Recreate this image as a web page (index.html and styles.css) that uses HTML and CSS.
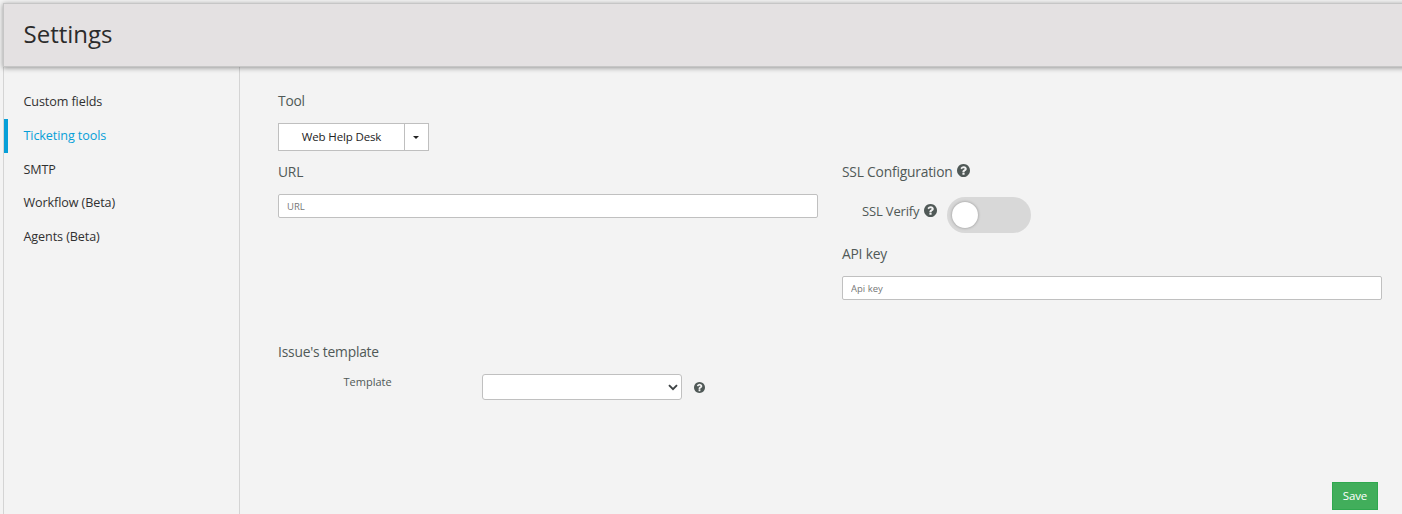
FILE: index.html
```html
<!DOCTYPE html>
<html lang="en">
<head>
<meta charset="utf-8">
<title>Settings</title>
<link rel="stylesheet" href="styles.css">
</head>
<body>
<svg class="symbols" aria-hidden="true">
  <symbol id="help" viewBox="0 0 1536 1536">
    <path fill="currentColor" d="M896 1248v-192q0-14-9-23t-23-9H672q-14 0-23 9t-9 23v192q0 14 9 23t23 9h192q14 0 23-9t9-23zm256-672q0-88-55.500-163T958 297t-170-41q-243 0-371 213-15 24 8 42l132 100q7 6 19 6 16 0 25-12 53-68 86-92 34-24 86-24 48 0 85.500 26t37.500 59q0 38-20 61t-68 45q-63 28-115.500 86.500T640 892v36q0 14 9 23t23 9h192q14 0 23-9t9-23q0-19 21.500-49.500T972 829q32-18 49-28.500t46-35 44.500-48 28-60.500 12.500-81zm384 192q0 209-103 385.500T1153.500 1433 768 1536t-385.500-103T103 1153.500 0 768t103-385.500T382.500 103 768 0t385.500 103T1433 382.500 1536 768z"/>
  </symbol>
</svg>
<div class="app">
  <header class="header"><h1 class="title">Settings</h1></header>
  <div class="body">
    <nav class="nav">
      <a class="nav-item">Custom fields</a>
      <a class="nav-item active">Ticketing tools</a>
      <a class="nav-item">SMTP</a>
      <a class="nav-item">Workflow (Beta)</a>
      <a class="nav-item">Agents (Beta)</a>
    </nav>
    <main class="content">
      <h2 class="label">Tool</h2>
      <div class="split">
        <button class="split-main">Web Help Desk</button>
        <button class="split-toggle" aria-label="Choose tool"><span class="caret"></span></button>
      </div>
      <div class="columns">
        <section class="column">
          <h2 class="label">URL</h2>
          <input class="field" placeholder="URL">
        </section>
        <section class="column">
          <h2 class="label">SSL Configuration<svg class="help"><use href="#help"/></svg></h2>
          <div class="verify">
            <span class="verify-label">SSL Verify</span>
            <svg class="help"><use href="#help"/></svg>
            <span class="switch"><span class="knob"></span></span>
          </div>
          <h2 class="label">API key</h2>
          <input class="field" placeholder="Api key">
        </section>
      </div>
      <h2 class="label issue">Issue's template</h2>
      <div class="template">
        <span class="template-label">Template</span>
        <div class="select">
          <svg class="chevron" viewBox="0 0 10 7"><path d="M1 1.200l4 4 4-4"/></svg>
        </div>
        <svg class="help small"><use href="#help"/></svg>
      </div>
      <button class="save">Save</button>
    </main>
  </div>
</div>
</body>
</html>
```
FILE: styles.css
```css
* { box-sizing: border-box; }
body {
  margin: 0;
  height: 514px;
  overflow: hidden;
  background: #f3f3f3;
  color: #505957;
  font-family: "Open Sans", sans-serif;
}
button, input { font-family: inherit; margin: 0; }
.symbols { display: none; }
.app {
  height: 514px;
  padding: 3px 0 0 3px;
  display: flex;
  flex-direction: column;
}
.header {
  height: 64px;
  flex: none;
  display: flex;
  align-items: center;
  padding: 0 0 2px 19.500px;
  margin-right: -6px;
  background: #e4e1e2;
  border: 1px solid #c6c6c6;
  box-shadow: 0 1px 5px rgba(0, 0, 0, .4);
  z-index: 1;
}
.title {
  margin: 0;
  font-size: 24px;
  line-height: 32px;
  font-weight: 400;
  color: #2b2b2b;
}
.body { flex: 1; display: flex; border-left: 1px solid #d4d4d4; }
.nav {
  width: 236px;
  flex: none;
  padding-top: 18px;
  border-right: 1px solid #d4d4d4;
}
.nav-item {
  display: block;
  height: 33.800px;
  padding-left: 15.500px;
  border-left: 4px solid transparent;
  font-size: 12.600px;
  letter-spacing: -.1px;
  line-height: 33px;
  color: #303030;
}
.nav-item.active { color: #069fd8; border-left-color: #069fd8; }
.content {
  flex: 1;
  padding: 24px 20px 0 38px;
  display: flex;
  flex-direction: column;
}
.label {
  margin: 0;
  height: 20px;
  display: flex;
  font-size: 13.800px;
  letter-spacing: -.2px;
  line-height: 20px;
  font-weight: 400;
}
.help { width: 13px; height: 13px; color: #505957; }
.label .help { margin: 2px 0 0 4px; }
.split { display: flex; height: 28px; margin-top: 12px; }
.split-main {
  width: 127px;
  padding: 0 0 1px;
  border: 1px solid #bfbfbf;
  background: #fff;
  font-size: 11.500px;
  letter-spacing: -.15px;
  color: #222;
}
.split-toggle {
  width: 25px;
  margin-left: -1px;
  padding: 0 1px 0 0;
  display: flex;
  align-items: center;
  justify-content: center;
  border: 1px solid #bfbfbf;
  background: #fff;
}
.caret {
  border: 3px solid transparent;
  border-top-color: #222;
  border-bottom: 0;
}
.columns { display: flex; gap: 24px; margin-top: 11px; }
.column { flex: 1; display: flex; flex-direction: column; }
.field {
  width: 100%;
  height: 24px;
  margin-top: 12px;
  padding: 0 8px;
  border: 1px solid #c0c0c0;
  border-radius: 2px;
  background: #fff;
  font-size: 9.500px;
}
.field::placeholder { color: #777; }
.verify {
  height: 36px;
  margin: 15px 0 11px;
  padding-left: 20px;
  display: flex;
  align-items: flex-start;
}
.verify-label {
  width: 61.500px;
  font-size: 13px;
  letter-spacing: -.15px;
  line-height: 29px;
  white-space: nowrap;
}
.verify .help { width: 13px; height: 13px; margin-top: 7px; }
.switch {
  width: 84px;
  height: 36px;
  margin-left: 10.500px;
  padding: 5px;
  border-radius: 18px;
  background: #d8d8d8;
}
.knob {
  display: block;
  width: 26px;
  height: 26px;
  border-radius: 50%;
  background: #fff;
  box-shadow: 0 0 3px rgba(0, 0, 0, .35);
}
.issue { margin-top: 42px; }
.template { display: flex; margin-top: 12px; height: 26px; padding-left: 65.500px; }
.template-label { width: 138.500px; font-size: 11px; line-height: 16px; }
.select {
  width: 200px;
  height: 26px;
  display: flex;
  align-items: center;
  justify-content: flex-end;
  padding-right: 3px;
  border: 1px solid #c0c0c0;
  border-radius: 3px;
  background: #fff;
}
.chevron { width: 10px; height: 7px; fill: none; stroke: #3d4244; stroke-width: 1.900; }
.help.small { width: 11px; height: 11px; margin: 8px 0 0 12px; }
.save {
  width: 46px;
  height: 28px;
  margin: 82px 4px 0 0;
  align-self: flex-end;
  padding: 0 0 1px;
  border: 1px solid #2fa84f;
  background: #41ae5b;
  color: #fff;
  font-size: 11.500px;
  letter-spacing: -.15px;
}
```
